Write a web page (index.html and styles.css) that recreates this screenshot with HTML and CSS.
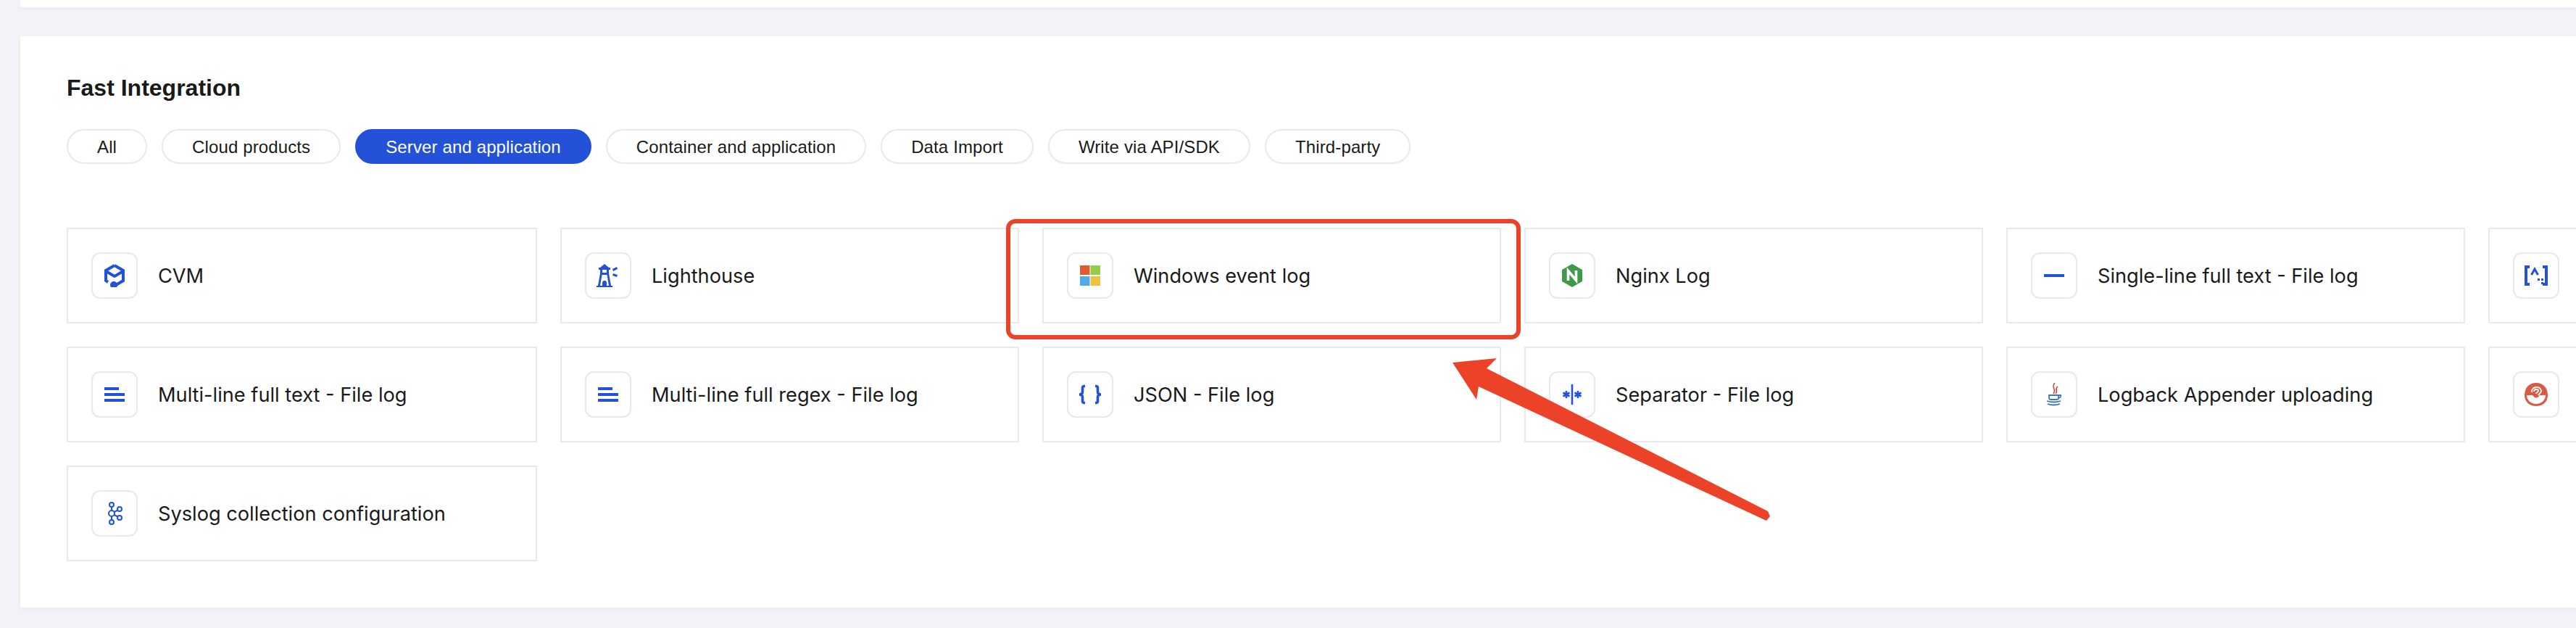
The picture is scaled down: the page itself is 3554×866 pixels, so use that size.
FILE: index.html
```html
<!DOCTYPE html>
<html lang="en">
<head>
<meta charset="UTF-8">
<title>Fast Integration</title>
<link rel="stylesheet" href="styles.css">
</head>
<body>

<div class="top-card"></div>

<div class="panel">
  <h2>Fast Integration</h2>

  <div class="chips">
    <span class="chip">All</span>
    <span class="chip">Cloud products</span>
    <span class="chip active">Server and application</span>
    <span class="chip">Container and application</span>
    <span class="chip">Data Import</span>
    <span class="chip">Write via API/SDK</span>
    <span class="chip">Third-party</span>
  </div>

  <div class="grid">
    <div class="item">
      <div class="icon-box">
        <svg class="blue-line" width="32" height="32" viewBox="0 0 32 32"><path d="M16 2 L28 9 V23 L18 29"/><path d="M16 2 L4 9 V23 L7 25"/><path d="M4 10 L16 17 L28 10"/><circle class="blue-fill" cx="15" cy="29" r="3"/></svg>
      </div>
      <span>CVM</span>
    </div>
    <div class="item">
      <div class="icon-box">
        <svg class="blue-fill" width="32" height="32" viewBox="0 0 32 32"><path d="M11 0 L17 5 H19 V8 H17 V13 L20 30 H22 V32 H0 V30 H2 L5 13 V8 H3 V5 H5 Z M8 8 V12 H14 V8 Z M7.5 15 L5 30 H8 V26 A3 3 0 0 1 14 26 V30 H17 L14.5 15 Z"/><path d="M22 7 L28 4 L29 7 L23 10 Z"/><path d="M23 13 L29 15 L28 18 L22 16 Z"/></svg>
      </div>
      <span>Lighthouse</span>
    </div>
    <div class="item">
      <div class="icon-box">
        <svg width="32" height="32" viewBox="0 0 32 32"><rect x="2" y="2" width="13.5" height="13" fill="#e05b2f"/><rect x="16.5" y="2" width="13.5" height="13" fill="#93cc48"/><rect x="2" y="17" width="13.5" height="13" fill="#4fabe9"/><rect x="16.5" y="17" width="13.5" height="13" fill="#f3bf40"/></svg>
      </div>
      <span>Windows event log</span>
    </div>
    <div class="item">
      <div class="icon-box">
        <svg width="32" height="32" viewBox="0 0 32 32"><path d="M16 0 L30 8 V24 L16 32 L2 24 V8 Z" fill="#3f9a47"/><path d="M10.5 23 V9.5 L21.5 22.5 V9" fill="none" stroke="#fff" stroke-width="3.6"/></svg>
      </div>
      <span>Nginx Log</span>
    </div>
    <div class="item">
      <div class="icon-box">
        <svg class="blue-fill" width="32" height="32" viewBox="0 0 32 32"><rect x="2" y="14" width="28" height="4"/></svg>
      </div>
      <span>Single-line full text - File log</span>
    </div>
    <div class="item">
      <div class="icon-box">
        <svg class="blue-line" width="32" height="32" viewBox="0 0 32 32"><path d="M7 4 H2 V28 H7"/><path d="M25 4 H30 V28 H25"/><path d="M9.5 15 L14 7 L18.5 15" stroke-width="3"/><rect class="blue-fill" x="18" y="20" width="3" height="3" stroke="none"/><rect class="blue-fill" x="23" y="20" width="3" height="3" stroke="none"/><rect class="blue-fill" x="23" y="25" width="3" height="3" stroke="none"/></svg>
      </div>
    </div>

    <div class="item">
      <div class="icon-box">
        <svg class="blue-fill" width="32" height="32" viewBox="0 0 32 32"><rect x="2" y="6" width="20" height="4"/><rect x="2" y="14" width="28" height="4"/><rect x="2" y="22" width="28" height="4"/></svg>
      </div>
      <span>Multi-line full text - File log</span>
    </div>
    <div class="item">
      <div class="icon-box">
        <svg class="blue-fill" width="32" height="32" viewBox="0 0 32 32"><rect x="2" y="6" width="20" height="4"/><rect x="2" y="14" width="28" height="4"/><rect x="2" y="22" width="28" height="4"/></svg>
      </div>
      <span>Multi-line full regex - File log</span>
    </div>
    <div class="item">
      <div class="icon-box">
        <svg class="blue-line" width="32" height="32" viewBox="0 0 32 32"><path d="M9 4.5 H8 Q5.5 4.5 5.5 7 V12 Q5.5 16 1 16 Q5.5 16 5.5 20 V25 Q5.5 27.5 8 27.5 H9" stroke-width="3.6"/><path d="M23 4.5 H24 Q26.5 4.5 26.5 7 V12 Q26.5 16 31 16 Q26.5 16 26.5 20 V25 Q26.5 27.5 24 27.5 H23" stroke-width="3.6"/></svg>
      </div>
      <span>JSON - File log</span>
    </div>
    <div class="item">
      <div class="icon-box">
        <svg class="blue-line" width="32" height="32" viewBox="0 0 32 32"><path d="M16 2 V30" stroke-width="2.6"/><path d="M8 11 V21 M3.5 13.5 L12.5 18.5 M12.5 13.5 L3.5 18.5" stroke-width="2.6"/><path d="M24 11 V21 M19.5 13.5 L28.5 18.5 M28.5 13.5 L19.5 18.5" stroke-width="2.6"/></svg>
      </div>
      <span>Separator - File log</span>
    </div>
    <div class="item">
      <div class="icon-box">
        <svg width="32" height="32" viewBox="0 0 32 32"><g fill="none" stroke="#c9453c" stroke-width="1.6"><path d="M17 0 C11 6 20 9 15 15"/><path d="M21 5 C16 9 22 11 18 15"/></g><g fill="none" stroke="#4474bd" stroke-width="1.8"><path d="M9 17 H22 V21 Q22 23 19 23 H12 Q9 23 9 21 Z"/><path d="M22 17 H25 Q26 20 22 21"/><path d="M6 25 Q15 28 25 25"/><path d="M7 29 Q15 32 24 29"/></g></svg>
      </div>
      <span>Logback Appender uploading</span>
    </div>
    <div class="item">
      <div class="icon-box">
        <svg width="32" height="32" viewBox="0 0 32 32"><path d="M16 0 C26 0 32 7 32 17 C32 26 25 32 16 32 C7 32 0 26 0 17 C0 7 6 0 16 0 Z" fill="#d95b45"/><path d="M3 17 H11 Q16 24 21 17 H29 C29 24 23 29 16 29 C9 29 3 24 3 17 Z" fill="#fff"/><g fill="none" stroke="#fff" stroke-width="1.8"><path d="M10 13 C9 5 22 3 23 11 C23 14 20 15 19 17"/><path d="M13 12 C13 8 19 8 19 11 C19 13 16 13 16 15"/></g></svg>
      </div>
    </div>

    <div class="item">
      <div class="icon-box">
        <svg class="blue-line" width="32" height="32" viewBox="0 0 32 32"><g stroke-width="2"><circle cx="12" cy="4" r="3"/><circle cx="12" cy="16" r="4"/><circle cx="12" cy="28" r="3"/><circle cx="23" cy="10" r="3"/><circle cx="23" cy="22" r="3"/><path d="M12 7 V12 M12 20 V25 M15.5 14 L20.5 11.5 M15.5 18 L20.5 20.5"/></g></svg>
      </div>
      <span>Syslog collection configuration</span>
    </div>
  </div>
</div>

<!-- red markup drawn on top of the screenshot -->
<svg class="markup" width="3554" height="866" viewBox="0 0 3554 866">
  <rect x="1391" y="305" width="704" height="160" rx="10" fill="none" stroke="#ec4227" stroke-width="6"/>
  <polygon points="2004,500 2065,494 2051,508 2439,705 2442,712 2437,718 2040,533 2037,551" fill="#ec4227"/>
</svg>

</body>
</html>
```

FILE: styles.css
```css
body {
  margin: 0;
  width: 3554px;
  height: 866px;
  overflow: hidden;
  background: #f2f3f8;
  font-family: "Liberation Sans", Arial, sans-serif;
  color: #1a1a1a;
}

.top-card {
  height: 10px;
  margin-left: 28px;
  background: white;
  box-shadow: 0 2px 6px rgba(54,58,80,0.05);
}

.panel {
  margin: 40px 0 0 28px;
  padding: 51px 0 64px 64px;
  background: white;
  box-shadow: 0 2px 6px rgba(54,58,80,0.05);
  overflow: hidden;
}

h2 {
  margin: 0;
  font-size: 32px;
  line-height: 40px;
  font-weight: bold;
}

.chips {
  display: flex;
  gap: 20px;
  margin-top: 37px;
}

.chip {
  box-sizing: border-box;
  height: 48px;
  padding: 0 40px;
  border: 2px solid #e7e8f0;
  border-radius: 24px;
  font-size: 24px;
  line-height: 46px;
  letter-spacing: 0.125px;
  white-space: nowrap;
}

.chip.active {
  background: #2352d8;
  border-color: #2352d8;
  color: white;
}

.grid {
  display: grid;
  grid-template-columns: 649px repeat(5, 633px);
  grid-auto-rows: 132px;
  gap: 32px;
  margin-top: 88px;
}

.item {
  display: flex;
  align-items: center;
  gap: 28px;
  padding-left: 32px;
  border: 2px solid #e7e8f0;
  font-family: Inter, "Liberation Sans", sans-serif;
  font-size: 27.2px;
  white-space: nowrap;
}

.icon-box {
  box-sizing: border-box;
  display: flex;
  align-items: center;
  justify-content: center;
  flex: none;
  width: 64px;
  height: 64px;
  border: 2px solid #e7e8f0;
  border-radius: 12px;
}

.blue-line {
  fill: none;
  stroke: #2352d8;
  stroke-width: 4;
}

.blue-fill {
  fill: #2352d8;
}

.markup {
  position: absolute;
  top: 0;
  left: 0;
}
```
